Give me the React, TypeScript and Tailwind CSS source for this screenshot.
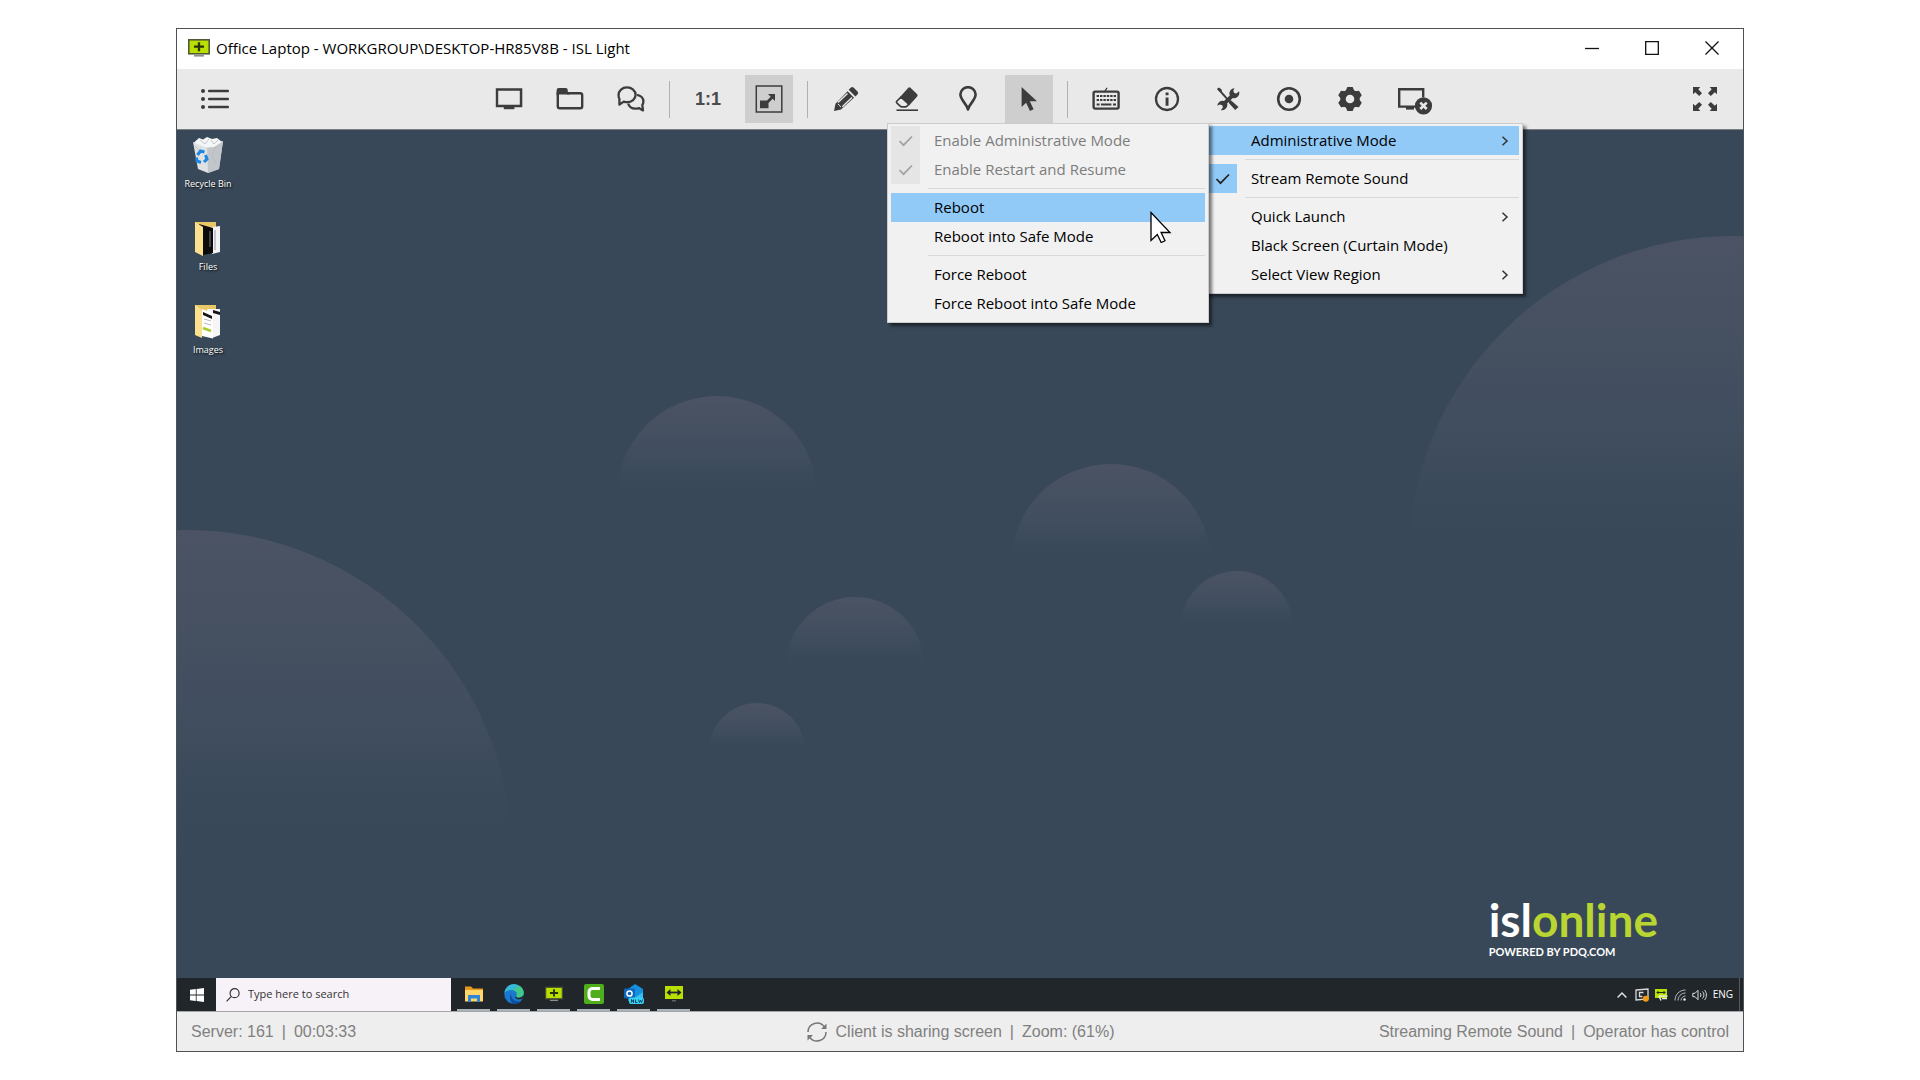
import type { ReactNode } from "react";
import clsx from "clsx";

const INK = "#3c3c3c";

// --- TOOLBAR ICONS ---
const ListIcon = () => (
  <svg width="28" height="22" viewBox="0 0 28 22" fill={INK}>
    <circle cx="2" cy="3" r="2" /><circle cx="2" cy="11" r="2" /><circle cx="2" cy="19" r="2" />
    <rect x="7" y="1.8" width="21" height="2.4" rx="1" />
    <rect x="7" y="9.8" width="21" height="2.4" rx="1" />
    <rect x="7" y="17.8" width="21" height="2.4" rx="1" />
  </svg>
);

const MonitorIcon = () => (
  <svg width="28" height="24" viewBox="0 0 28 24" fill={INK}>
    <path fillRule="evenodd" d="M.8 1.2h26.5v19H.8zM3.2 3.8v14h21.6v-14z" />
    <path d="M8.8 20h10.6v2.2H8.8z" />
  </svg>
);

const FolderIcon = () => (
  <svg width="28" height="24" viewBox="0 0 28 24">
    <path d="M1.8 5v14.2a2 2 0 0 0 2 2h20.4a2 2 0 0 0 2-2V8.2a2 2 0 0 0-2-2H11" fill="none" stroke={INK} strokeWidth="2.4" />
    <path d="M.6 8V3.2A2.2 2.2 0 0 1 2.8 1h6.8a2.2 2.2 0 0 1 2.2 2.2V5l1.6 2.4H3L1.4 9z" fill={INK} />
  </svg>
);

const ChatIcon = () => (
  <svg width="28" height="26" viewBox="0 0 28 26" fill="none" stroke={INK} strokeWidth="2.3" strokeLinejoin="round">
    <path d="M2.4 18.6V13A7.4 7 0 0 1 1.6 9C1.6 4.6 5.2 1.4 10 1.4s8.6 3.2 8.6 7.4-3.8 7.4-8.6 7.4c-1.2 0-2.2-.2-3.2-.6z" />
    <path d="M20 8.8c3.8.6 6.4 3.4 6.4 6.6 0 1.4-.4 2.6-1.1 3.6l.7 5.4-4.2-2.3c-1 .4-2.2.6-3.2.6-3.8 0-6.6-2.2-7.4-5.2" />
  </svg>
);

const FitIcon = () => (
  <svg width="28" height="28" viewBox="0 0 28 28">
    <rect x="1.3" y="1" width="25.5" height="26" fill="none" stroke={INK} strokeWidth="1.5" />
    <path d="M5 15.500h8.500v7.700H5zM13 9h7v7l-2.300-2.300-4 4-2-2 4-4z" fill={INK} />
  </svg>
);

const PencilIcon = () => (
  <svg width="26" height="26" viewBox="0 0 26 26">
    <path d="M18 1.400a2 2 0 0 1 2.500.2l4 4a2 2 0 0 1 .2 2.600l-2.300 2.400-6.700-6.800z" fill={INK} />
    <path d="M14.600 5.200l6.400 6.500L8 23.600 1 25l1.500-7.300z" fill={INK} />
    <path d="M14.500 7.400L5 16.600M19 11.600L9.300 20.800" stroke="#e9e9e9" strokeWidth="1.400" />
    <path d="M4.800 18l1.600 1.200 1.400 2" stroke="#e9e9e9" strokeWidth="1" fill="none" />
  </svg>
);

const EraserIcon = () => (
  <svg width="24" height="26" viewBox="0 0 24 26">
    <path d="M15.200 1.600L22 8a2 2 0 0 1 0 2.800l-8 8.600-8.700-8.600 8-9a1.500 1.500 0 0 1 1.900-.2z" fill={INK} />
    <path d="M6 11l-4 4a1.600 1.600 0 0 0 0 2.200l3.200 3c.6.600 1.200.6 2 .6h3c.7 0 1.300-.2 1.800-.7l2-2z" fill="none" stroke={INK} strokeWidth="1.700" />
    <path d="M1.500 24.200h21.500" stroke={INK} strokeWidth="1.600" />
  </svg>
);

const PinIcon = () => (
  <svg width="20" height="26" viewBox="0 0 20 26">
    <path d="M10 23.400C8.600 17.600 2.400 14 2.400 8.600a7.600 7.400 0 0 1 15.200 0c0 5.400-6.200 9-7.600 14.800z" fill="none" stroke={INK} strokeWidth="2.600" strokeLinejoin="round" />
  </svg>
);

const PointerIcon = () => (
  <svg width="18" height="26" viewBox="0 0 18 26" fill={INK}>
    <path d="M1.600 1v20l4.500-4.300L10 25l3.600-1.700-3.800-8H17z" />
  </svg>
);

const KeyboardIcon = () => (
  <svg width="28" height="24" viewBox="0 0 28 24">
    <path d="M13 4.500c0-2 1.800-1.500 1.800-3.700" stroke={INK} strokeWidth="1.300" fill="none" />
    <rect x="1.600" y="4.600" width="25" height="17" rx="1.600" fill="none" stroke={INK} strokeWidth="2.400" />
    <path d="M4.600 9h19.500M4.600 13h19.500" stroke={INK} strokeWidth="2.200" strokeDasharray="2.400 1" />
    <path d="M4.600 17.400h3M9 17.400h10.400M21 17.400h3" stroke={INK} strokeWidth="2" />
  </svg>
);

const InfoIcon = () => (
  <svg width="26" height="26" viewBox="0 0 26 26">
    <circle cx="13" cy="13" r="11" fill="none" stroke={INK} strokeWidth="2.300" />
    <path d="M11.600 6.600h2.900v2.700h-2.900zM11.600 11.400h2.900v8.300h-2.900z" fill={INK} />
  </svg>
);

const ToolsIcon = () => (
  <svg width="24" height="24" viewBox="0 0 24 24">
    <path d="M2 1.600l9.600 10.800" stroke={INK} strokeWidth="2" />
    <path d="M1 2l2-1.400 2.600 1.800L6 5 4 5z" fill={INK} />
    <path d="M12.500 12.500l3 1.200 7 6.300-3.300 3-6.400-7z" fill={INK} />
    <path d="M18.600 1.200a5.200 5.200 0 0 0-4.800 7.200l-5.800 5.700A5.200 5.200 0 0 0 1.300 18.800l2.400-1.400 2.600.8.600 2.400-2 2.400a5.200 5.200 0 0 0 6.200-6.600l5.700-5.400a5.200 5.200 0 0 0 6.200-6.800l-2.500 2.300-2.400-.600-.800-2.300z" fill={INK} />
  </svg>
);

const RecordIcon = () => (
  <svg width="26" height="26" viewBox="0 0 26 26">
    <circle cx="13" cy="13" r="10.800" fill="none" stroke={INK} strokeWidth="2.600" />
    <circle cx="13" cy="13" r="4.300" fill={INK} />
  </svg>
);

const GearIcon = () => (
  <svg width="26" height="26" viewBox="0 0 26 26">
    <circle cx="13" cy="13" r="7" fill="none" stroke={INK} strokeWidth="5.400" />
    <g fill={INK}>
      {[0, 60, 120, 180, 240, 300].map((a) => (
        <path key={a} d="M8.500 5.500L10.300 1h5.400l1.800 4.500z" transform={`rotate(${a} 13 13)`} />
      ))}
    </g>
  </svg>
);

const EndSessionIcon = () => (
  <svg width="36" height="28" viewBox="0 0 36 28">
    <path d="M19 19.600H2.200V2.200h24v8" fill="none" stroke={INK} strokeWidth="2.400" />
    <path d="M9 20h8v2.600H9z" fill={INK} />
    <circle cx="26.500" cy="18.800" r="8.600" fill={INK} />
    <path d="M23.300 15.600l6.400 6.400M29.700 15.600l-6.400 6.400" stroke="#e9e9e9" strokeWidth="2.600" />
  </svg>
);

const ExpandIcon = () => (
  <svg width="26" height="26" viewBox="0 0 26 26" fill={INK}>
    {[0, 90, 180, 270].map((a) => (
      <path key={a} d="M1 1h7.300L6.300 3.200l3.700 4-2.800 2.800-4-3.700L1 8.300z" transform={`rotate(${a} 13 13)`} />
    ))}
  </svg>
);

const PlusScreen = ({ className }: { className: string }) => (
  <svg className={className} viewBox="0 0 22 18">
    <rect x=".8" y=".8" width="20.400" height="14" fill="#b9e000" stroke="#4a5032" strokeWidth="1.500" />
    <path d="M6 16h10v1.600H6z" fill="#8b8f88" />
    <path d="M11 3.200v9M6 7.700h10" stroke="#2b3300" strokeWidth="2.300" />
  </svg>
);

// --- DESKTOP ICONS ---
const RecycleBin = () => (
  <svg width="32" height="36" viewBox="0 0 32 36">
    <path d="M1 5l14 3.500L31 4l-4 28-11 4-10-4z" fill="#dfe2e4" />
    <path d="M15 8.500L31 4l-4 28-11 4z" fill="#c2c6ca" />
    <path d="M2 5.500L7 1l4 1.500L15 0l5 2 5-1 5 4-8 5-8 .5z" fill="#f5f6f7" />
    <path d="M8 3l5 4 4-5M19 3l3 4 4-4M24 10l-4 8 4 8M3 9l4 4" stroke="#b4b9be" strokeWidth=".8" fill="none" />
    <path d="M5.500 18l3-4 4 1M13.500 18l1.500 4-3 3M9 25.500l-4-1.500-.5-3.500" stroke="#1c86e0" strokeWidth="3" fill="none" />
  </svg>
);

const FilesFolder = () => (
  <svg width="26" height="35" viewBox="0 0 26 35">
    <path d="M0 1h21v29H8L0 31z" fill="#e9c766" />
    <path d="M11 7l14-2v26l-8 2z" fill="#f4f4f4" />
    <path d="M20 9v20" stroke="#c4c7d4" strokeWidth="2" />
    <path d="M4 3l14 4v25l-10 2z" fill="#0b0b0b" />
    <path d="M15 10v16" stroke="#555" strokeWidth="1.500" />
    <path d="M0 1l8 5v29L0 31z" fill="#fbe08f" />
  </svg>
);

const ImagesFolder = () => (
  <svg width="26" height="35" viewBox="0 0 26 35">
    <path d="M0 1h21v29H8L0 31z" fill="#e9c766" />
    <path d="M12 5l13 0v26l-8 3z" fill="#f6f6f6" />
    <path d="M18 6l7 2v3l-7-2z" fill="#151515" />
    <path d="M7 5l11 4v25.500L7 32z" fill="#fff" />
    <path d="M8 8l9 4v3l-9-4z" fill="#151515" />
    <path d="M9 15l7 2M9 19l7 2" stroke="#b9b9b9" />
    <path d="M8 24l8 3" stroke="#a9cb2c" strokeWidth="2.500" />
    <path d="M0 1l7 5v28L0 31z" fill="#fbe08f" />
  </svg>
);

// Spheres that fade out towards their centre line
const BUBBLES = [
  { cx: 10, cy: 725, r: 325 },
  { cx: 1556, cy: 431, r: 325 },
  { cx: 540, cy: 366, r: 100 },
  { cx: 934, cy: 434, r: 100 },
  { cx: 1060, cy: 497, r: 56 },
  { cx: 678, cy: 536, r: 69 },
  { cx: 580, cy: 621, r: 48 },
];

const Wallpaper = () => (
  <svg className="absolute inset-0 h-full w-full" viewBox="0 0 1566 848" preserveAspectRatio="xMidYMid slice">
    <defs>
      <linearGradient id="bubble" x1="0" y1="0" x2="0" y2="1">
        <stop offset="0" stopColor="#4b5364" />
        <stop offset=".28" stopColor="#414e5f" />
        <stop offset=".55" stopColor="#384858" stopOpacity="0" />
      </linearGradient>
    </defs>
    {BUBBLES.map((b) => (
      <circle key={b.cx} cx={b.cx} cy={b.cy} r={b.r} fill="url(#bubble)" />
    ))}
  </svg>
);

// --- TASKBAR ICONS ---
const ExplorerIcon = () => (
  <svg width="18" height="17" viewBox="0 0 18 17">
    <path d="M0 1.500h6l2 2h10V16H0z" fill="#e79a1b" />
    <path d="M0 5h18v11.500H0z" fill="#ffd667" />
    <path d="M3 10h12v7h-3v-3.500H6V17H3z" fill="#2f86d6" />
  </svg>
);

const EdgeIcon = () => (
  <svg width="20" height="20" viewBox="0 0 20 20">
    <circle cx="10" cy="10" r="9.800" fill="#1a78cf" />
    <path d="M.5 8.500C1.500 3.500 5.500.2 10 .2c5.500 0 9.800 4 9.800 8.500 0 3-2.300 5-5 5-2 0-3-.8-2.500-1.800.8-1.400.8-3-.5-4.200C9 5 3.500 5.500.5 8.500z" fill="#42c88a" />
    <path d="M.5 8.500C1.500 3.500 5.500.2 10 .2c2 0 3.500.8 4.500 1.800L9 6C6 5.500 2.500 6.500.5 8.500z" fill="#35b8dc" />
    <path d="M7 10c0 4 3 7.500 8 7.500 1.300 0 2.300-.300 3-.7C16 19 13 20 10.500 19.800 6 19.500 5 13 7 10z" fill="#0d4f9c" />
    <path d="M12.300 11.900c-.5 1 .5 1.800 2.500 1.800 2 0 3.500-.8 4.500-2.400l.5 1.200-1.800 2.500-4 .6-3-1.800z" fill="#20262a" />
  </svg>
);

const CamtasiaIcon = () => (
  <svg width="20" height="20" viewBox="0 0 20 20">
    <rect width="20" height="20" rx="2" fill="#4fae1c" />
    <path d="M16 4.500H8.500a3.500 3.500 0 0 0-3.500 3.500v4a3.500 3.500 0 0 0 3.500 3.500H16" fill="none" stroke="#fff" strokeWidth="3" />
  </svg>
);

const OutlookIcon = () => (
  <svg width="20" height="20" viewBox="0 0 20 20">
    <path d="M4 5l7-5 8 5v12H4z" fill="#1490df" />
    <path d="M6 9l6 4 7-5v10H6z" fill="#35c0f2" />
    <rect y="4.500" width="11" height="10" rx="1" fill="#0f66bd" />
    <circle cx="5.500" cy="9.500" r="2.600" fill="none" stroke="#fff" strokeWidth="1.500" />
    <rect x="5" y="13.500" width="15" height="6.500" rx="2" fill="#39d2f2" />
    <path d="M7.500 18.500v-3l2 3v-3M11.500 15.500v3h2M14.500 15.500l1 3 1-2 1 2 1-3" stroke="#0b3350" strokeWidth=".9" fill="none" />
  </svg>
);

const LinkScreenIcon = () => (
  <svg width="18" height="16" viewBox="0 0 18 16">
    <rect width="18" height="13" fill="#b9e000" />
    <path d="M7 14h4v1.500H7z" fill="#5d6266" />
    <path d="M4 6.500h10" stroke="#20262a" strokeWidth="1.800" />
    <path d="M1.500 6.500L5.500 3v7zM16.500 6.500L12.500 3v7z" fill="#20262a" />
  </svg>
);

const Chevron = () => (
  <svg className="mr-2.5" width="8" height="10" viewBox="0 0 8 10">
    <path d="M1.500.8L6 5 1.500 9.200" fill="none" stroke="#333" strokeWidth="1.500" />
  </svg>
);

const Check = () => (
  <svg width="16" height="12" viewBox="0 0 16 12">
    <path d="M1.500 6l4 4.200L14 1.500" fill="none" stroke="currentColor" strokeWidth="1.700" />
  </svg>
);

// --- BUILDING BLOCKS ---
function ToolButton({ label, active, children }: { label: string; active?: boolean; children: ReactNode }) {
  return (
    <button type="button" aria-label={label} className={clsx("flex size-12 items-center justify-center", active && "bg-[#cecece]")}>
      {children}
    </button>
  );
}

const Divider = () => <div className="mx-px h-[37px] w-px bg-[#b0b0b0]" />;

const MenuRule = () => (
  <div className="flex h-[9px] items-center pl-[37px]">
    <div className="h-px w-full bg-[#d8d8d8]" />
  </div>
);

type MenuItemProps = { label: string; checked?: boolean; disabled?: boolean; active?: boolean; submenu?: boolean };

function MenuItem({ label, checked, disabled, active, submenu }: MenuItemProps) {
  return (
    <button
      type="button"
      role={checked ? "menuitemcheckbox" : "menuitem"}
      aria-checked={checked}
      disabled={disabled}
      className={clsx("flex h-[29px] w-full items-center text-left", active && "bg-[#91c9f7]", disabled ? "text-[#7d7d7d]" : "text-black")}
    >
      <span
        className={clsx(
          "mr-3.5 flex h-full w-[29px] items-center justify-center",
          checked && (disabled ? "bg-[#e5e5e5] text-[#a0a0a0]" : "bg-[#91c9f7] text-[#222]")
        )}
      >
        {checked && <Check />}
      </span>
      <span className="flex-1 whitespace-nowrap">{label}</span>
      {submenu && <Chevron />}
    </button>
  );
}

const menuBox = "absolute border border-[#cccccc] bg-[#f1f1f1] px-[3px] pt-0.5 pb-1 text-[15px] shadow-[3px_3px_3px_rgba(0,0,0,0.5)]";

function ToolsMenu() {
  return (
    <div role="menu" className={clsx(menuBox, "top-full left-0 z-10 w-[319px]")}>
      <MenuItem label="Administrative Mode" active submenu />
      <MenuRule />
      <MenuItem label="Stream Remote Sound" checked />
      <MenuRule />
      <MenuItem label="Quick Launch" submenu />
      <MenuItem label="Black Screen (Curtain Mode)" />
      <MenuItem label="Select View Region" submenu />

      <div role="menu" className={clsx(menuBox, "-top-px right-full -mr-1 w-[322px]")}>
        <MenuItem label="Enable Administrative Mode" checked disabled />
        <MenuItem label="Enable Restart and Resume" checked disabled />
        <MenuRule />
        <MenuItem label="Reboot" active />
        <MenuItem label="Reboot into Safe Mode" />
        <MenuRule />
        <MenuItem label="Force Reboot" />
        <MenuItem label="Force Reboot into Safe Mode" />
        <svg className="pointer-events-none absolute top-[87px] right-9" width="22" height="32" viewBox="0 0 22 32">
          <path d="M1 1.500v28l6.300-6 3.900 8 3.800-1.700-3.900-8.300H20z" fill="#fff" stroke="#000" strokeWidth="1.300" />
        </svg>
      </div>
    </div>
  );
}

function TitleBar() {
  return (
    <header className="flex h-10 items-center bg-white pr-6 pb-0.5 pl-[11px]">
      <PlusScreen className="h-[18px] w-[22px]" />
      <h1 className="ml-1.5 flex-1 text-[15px] text-black">Office Laptop - WORKGROUP\DESKTOP-HR85V8B - ISL Light</h1>
      <div className="flex gap-[46px]">
        <button type="button" aria-label="Minimize">
          <svg width="14" height="14" viewBox="0 0 14 14"><path d="M0 7.500h14" stroke="#111" strokeWidth="1.300" /></svg>
        </button>
        <button type="button" aria-label="Maximize">
          <svg width="14" height="14" viewBox="0 0 14 14"><path d="M.7.700h12.600v12.600H.700z" fill="none" stroke="#111" strokeWidth="1.300" /></svg>
        </button>
        <button type="button" aria-label="Close">
          <svg width="14" height="14" viewBox="0 0 14 14"><path d="M.5.500l13 13M13.500.500l-13 13" stroke="#111" strokeWidth="1.300" /></svg>
        </button>
      </div>
    </header>
  );
}

function Toolbar() {
  return (
    <nav className="flex h-[61px] items-center justify-between border-b border-[#7b7f83] bg-[#e9e9e9] px-3.5">
      <ToolButton label="Menu"><ListIcon /></ToolButton>
      <div className="flex items-center gap-[13px]">
        <ToolButton label="Screen"><MonitorIcon /></ToolButton>
        <ToolButton label="Files"><FolderIcon /></ToolButton>
        <ToolButton label="Chat"><ChatIcon /></ToolButton>
        <Divider />
        <ToolButton label="Original size">
          <span className="font-['Liberation_Sans',sans-serif] text-lg font-bold text-[#4a4a4a]">1:1</span>
        </ToolButton>
        <ToolButton label="Fit to window" active><FitIcon /></ToolButton>
        <Divider />
        <ToolButton label="Pencil"><PencilIcon /></ToolButton>
        <ToolButton label="Eraser"><EraserIcon /></ToolButton>
        <ToolButton label="Marker"><PinIcon /></ToolButton>
        <ToolButton label="Pointer" active><PointerIcon /></ToolButton>
        <Divider />
        <ToolButton label="Keyboard"><KeyboardIcon /></ToolButton>
        <ToolButton label="Info"><InfoIcon /></ToolButton>
        <div className="relative">
          <ToolButton label="Tools"><ToolsIcon /></ToolButton>
          <ToolsMenu />
        </div>
        <ToolButton label="Record"><RecordIcon /></ToolButton>
        <ToolButton label="Settings"><GearIcon /></ToolButton>
        <button type="button" aria-label="End session" className="flex size-12 items-center justify-end pt-1 pr-0.5">
          <EndSessionIcon />
        </button>
      </div>
      <ToolButton label="Full screen"><ExpandIcon /></ToolButton>
    </nav>
  );
}

const SHORTCUTS = [
  { label: "Recycle Bin", icon: <RecycleBin /> },
  { label: "Files", icon: <FilesFolder /> },
  { label: "Images", icon: <ImagesFolder /> },
];

function Desktop() {
  return (
    <main className="relative flex flex-1 flex-col justify-between overflow-hidden bg-[#384858]">
      <Wallpaper />
      <div className="relative flex w-[62px] flex-col gap-7 pt-[7px]">
        {SHORTCUTS.map((s) => (
          <button key={s.label} type="button" className="flex flex-col items-center gap-[3px] text-[9px] leading-4 whitespace-nowrap text-white [text-shadow:1px_1px_2px_#000]">
            <span className="flex h-9 items-end">{s.icon}</span>
            {s.label}
          </button>
        ))}
      </div>
      <div className="relative mr-[85px] mb-[18px] self-end font-['Lato',sans-serif]">
        <div className="text-[46px] leading-12 font-bold text-white">
          isl<span className="text-[#b9d531]">online</span>
        </div>
        <div className="text-[11px] leading-4 font-bold text-white">POWERED BY PDQ.COM</div>
      </div>
    </main>
  );
}

const APPS = [
  { name: "File Explorer", icon: <ExplorerIcon /> },
  { name: "Edge", icon: <EdgeIcon /> },
  { name: "ISL Light", icon: <PlusScreen className="h-4 w-[18px]" /> },
  { name: "Camtasia", icon: <CamtasiaIcon /> },
  { name: "Outlook", icon: <OutlookIcon /> },
  { name: "ISL AlwaysOn", icon: <LinkScreenIcon /> },
];

function Taskbar() {
  return (
    <div className="flex h-[33px] items-stretch bg-[#20262a]">
      <button type="button" aria-label="Start" className="flex w-[39px] items-center justify-center">
        <svg width="14" height="14" viewBox="0 0 14 14" fill="#fff">
          <path d="M0 1.800L5.800 1v5.600H0zM6.600.9L14 0v6.600H6.600zM0 7.400h5.800V13L0 12.200zM6.600 7.400H14V14l-7.400-.9z" />
        </svg>
      </button>
      <label className="flex w-[235px] items-center gap-2 bg-[#f7f2f7] pl-2.5">
        <svg width="14" height="14" viewBox="0 0 14 14" fill="none" stroke="#333" strokeWidth="1.200">
          <circle cx="8.600" cy="5.200" r="4.500" /><path d="M5.400 8.400L.6 13.300" />
        </svg>
        <input type="text" aria-label="Search" placeholder="Type here to search" className="min-w-0 flex-1 text-[11px] outline-none placeholder:text-[#333]" />
      </label>
      <div className="ml-1.5 flex gap-[7px]">
        {APPS.map((app) => (
          <button key={app.name} type="button" aria-label={app.name} className="flex w-[33px] items-center justify-center border-b-2 border-[#aab2b8]">
            {app.icon}
          </button>
        ))}
      </div>
      <div className="ml-auto flex items-center gap-1.5 pr-[3px]">
        <svg width="12" height="6" viewBox="0 0 12 6"><path d="M.6 5.400L5 1l4.400 4.400" fill="none" stroke="#e6e6e6" strokeWidth="1.400" /></svg>
        <svg width="14" height="14" viewBox="0 0 14 14">
          <path d="M1 2l12-1v10L1 12z" fill="none" stroke="#d8d8d8" strokeWidth="1.300" />
          <path d="M8.500 4.500h-4v4h3" fill="none" stroke="#d8d8d8" strokeWidth="1.300" />
          <circle cx="10.800" cy="10.800" r="3" fill="#f59a12" />
        </svg>
        <svg width="13" height="14" viewBox="0 0 13 14">
          <path d="M0 1h12v9H0z" fill="#b9e000" />
          <path d="M2 4.500h8M3.500 3L2 4.500 3.500 6M8.500 3L10 4.500 8.500 6" stroke="#20262a" fill="none" />
          <path d="M4 8h8.500M4 8l2 4.500M7 10.500h5" stroke="#e8ecd8" strokeWidth="1.500" fill="none" />
        </svg>
        <svg width="12" height="12" viewBox="0 0 12 12" fill="none" stroke="#b9bcbe">
          <path d="M1 11.500C1 5.500 5.500 1 11.500 1M4 11.500C4 7.500 7 4 11.500 4M7 11.500c0-2.500 2-4.500 4.500-4.500" /><circle cx="10.500" cy="10.500" r="1" fill="#fff" />
        </svg>
        <svg width="15" height="12" viewBox="0 0 15 12" fill="none" stroke="#dcdcdc">
          <path d="M.8 4.300h2.200L6 1.300v9.400L3 7.700H.800zM8.200 4c1 1 1 3 0 4M10.400 2.500c2 2 2 5 0 7M12.600 1c2.400 3 2.400 7 0 10" />
        </svg>
        <span className="text-[10px] text-white">ENG</span>
        <div className="h-[33px] w-px bg-[#565b5e]" />
      </div>
    </div>
  );
}

function StatusBar() {
  return (
    <footer className="grid h-10 grid-cols-[1fr_auto_1fr] items-center border-t border-[#a5a8aa] bg-[#eeeeee] px-3.5 font-['Liberation_Sans',sans-serif] text-base text-[#808080]">
      <div className="flex gap-2">
        <span>Server: 161</span><span>|</span><span>00:03:33</span>
      </div>
      <div className="flex items-center gap-2">
        <svg width="22" height="20" viewBox="0 0 22 20" fill="none" stroke="#777" strokeWidth="1.500">
          <path d="M2 10a9 9 0 0 1 16.400-5.100M20 10A9 9 0 0 1 3.600 15.100" />
          <path d="M20.500 1.500v5.500H15zM1.500 18.500V13H7z" fill="#777" stroke="none" />
        </svg>
        <span>Client is sharing screen</span><span>|</span><span>Zoom: (61%)</span>
      </div>
      <div className="flex justify-end gap-2">
        <span>Streaming Remote Sound</span><span>|</span><span>Operator has control</span>
      </div>
    </footer>
  );
}

export default function App() {
  return (
    <div className="flex min-h-screen flex-col bg-white px-44 py-7 font-['Open_Sans','Noto_Sans',sans-serif]">
      <div className="flex flex-1 flex-col border border-[#4d5257]">
        <TitleBar />
        <Toolbar />
        <Desktop />
        <Taskbar />
        <StatusBar />
      </div>
    </div>
  );
}
